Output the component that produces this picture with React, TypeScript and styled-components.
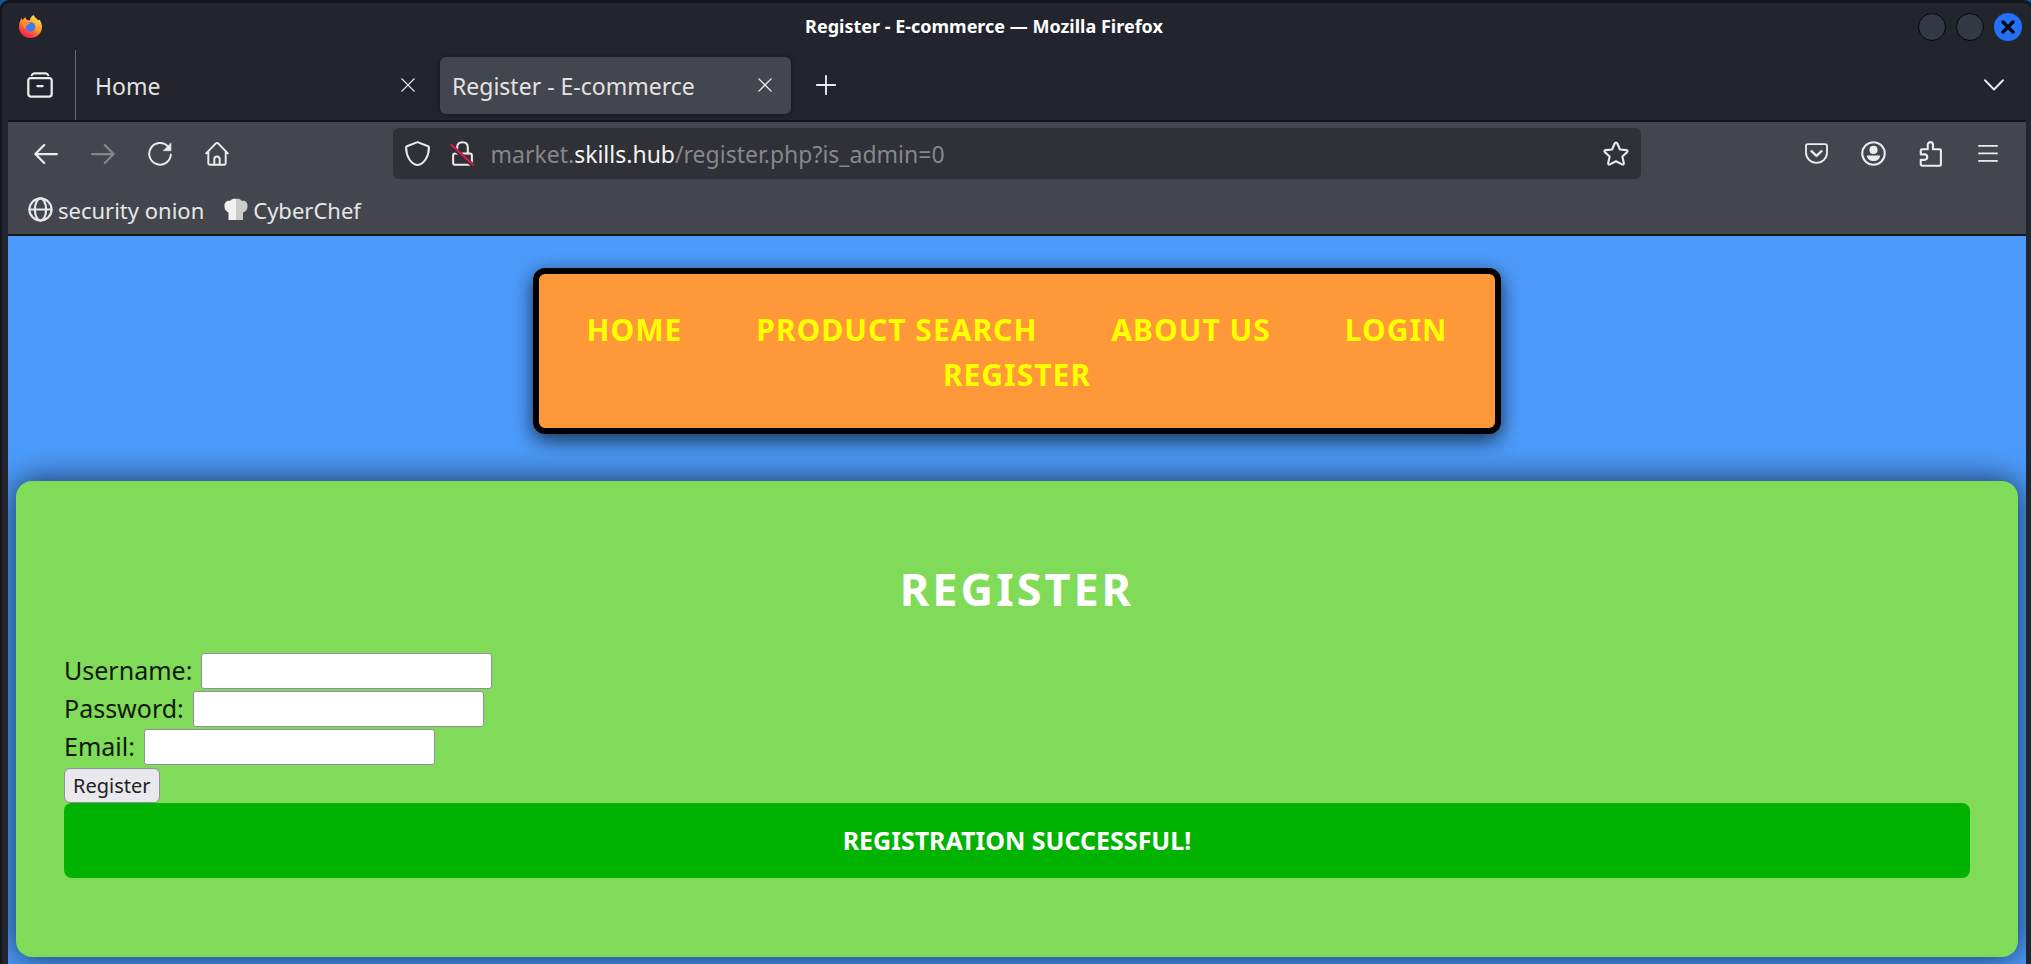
import React from "react";
import styled, { createGlobalStyle } from "styled-components";

const GlobalStyle = createGlobalStyle`
  *, *::before, *::after { box-sizing: border-box; }
  body {
    margin: 0;
    background: #14151b;
    font-family: "Noto Sans", "Open Sans", sans-serif;
  }
  button, input { font-family: inherit; }
`;

const Desktop = styled.div`
  min-height: 100vh;
  display: flex;
  flex-direction: column;
  padding: 3px 0 0 2px;
  background: linear-gradient(#17181f, #17181f) 0 8px no-repeat, #0a5a9c;
`;

const BrowserWindow = styled.div`
  flex: 1;
  display: flex;
  flex-direction: column;
  background: #23252e;
  border-radius: 8px 8px 0 0;
  padding: 0 5px 0 6px;
  box-shadow: 0 0 0 3px #14151b;
`;

const TitleBar = styled.header`
  display: flex;
  align-items: center;
  height: 47px;
  padding: 0 4px 0 11px;
`;

const WindowTitle = styled.div`
  flex: 1;
  text-align: center;
  color: #fff;
  font-size: 18px;
  font-weight: 700;
  line-height: 26px;
  margin-left: 8px;
  padding-bottom: 2px;
`;

const WindowButtons = styled.div`
  display: flex;
  gap: 10px;
`;

const WindowButton = styled.button<{ $close?: boolean }>`
  display: grid;
  place-items: center;
  width: 28px;
  height: 28px;
  padding: 0;
  border-radius: 50%;
  border: ${(p) => (p.$close ? "0" : "1px solid #060709")};
  background: ${(p) => (p.$close ? "#2470f7" : "#343844")};
`;

const TabStrip = styled.div`
  display: flex;
  align-items: center;
  height: 72px;
  border-bottom: 2px solid #14151b;
`;

const IconButton = styled.button<{ $w?: number; $dim?: boolean }>`
  display: grid;
  place-items: center;
  flex: none;
  width: ${(p) => p.$w ?? 57}px;
  height: 50px;
  padding: 0;
  border: 0;
  background: none;
  color: ${(p) => (p.$dim ? "#85868b" : "#ebebec")};
`;

const ViewCell = styled.div`
  align-self: stretch;
  display: flex;
  align-items: center;
  width: 68px;
  padding-left: 3px;
  border-right: 1px solid #66686e;
`;

const Tabs = styled.div`
  display: flex;
  gap: 6px;
  margin-left: 7px;
`;

const Tab = styled.div<{ $active?: boolean }>`
  display: flex;
  align-items: center;
  width: 351px;
  height: 57px;
  padding-left: 12px;
  border-radius: 6px;
  color: #e2e2e3;
  background: ${(p) => (p.$active ? "#44464d" : "transparent")};
  box-shadow: ${(p) => (p.$active ? "0 0 4px rgba(0, 0, 0, 0.5)" : "none")};
`;

const TabLabel = styled.span`
  flex: 1;
  padding-top: 2px;
  font-size: 23px;
  line-height: 32px;
`;

const Spacer = styled.div`
  flex: 1;
`;

const Toolbars = styled.div`
  background: #44464d;
  border-bottom: 2px solid #17181f;
`;

const NavBar = styled.div`
  display: flex;
  align-items: center;
  height: 63px;
  padding: 0 10px 0 9px;
`;

const AddressBox = styled.div`
  flex: 0 1 1248px;
  display: flex;
  align-items: center;
  height: 51px;
  padding: 0 2px;
  border-radius: 6px;
  background: #303136;
`;

const Address = styled.div`
  flex: 1;
  padding-left: 6px;
  color: #86878b;
  font-size: 23px;
  line-height: 32px;
  white-space: nowrap;

  b {
    color: #f4f4f4;
    font-weight: 400;
  }
`;

const BookmarkBar = styled.nav`
  display: flex;
  align-items: center;
  gap: 20px;
  height: 49px;
  padding: 0 20px;
`;

const Bookmark = styled.a`
  display: flex;
  align-items: center;
  gap: 5px;
  color: #e6e6e7;
  font-size: 22px;
  line-height: 32px;
  text-decoration: none;
`;

const Page = styled.main`
  flex: 1;
  display: flex;
  flex-direction: column;
  padding: 32px 0 7px;
  overflow: hidden;
  background: #4c9bfb;
`;

const SiteNav = styled.nav`
  align-self: center;
  width: 48%;
  min-width: 480px;
  padding: 33px 8px 31px;
  border: 6px solid #000;
  border-radius: 12px;
  background: #ff9838;
  box-shadow: 0 6px 20px rgba(0, 0, 0, 0.7);
`;

const NavList = styled.ul`
  display: flex;
  flex-wrap: wrap;
  justify-content: center;
  column-gap: 74px;
  margin: 0;
  padding: 0;
  list-style: none;
`;

const NavLink = styled.a`
  display: block;
  color: #ff0;
  font-size: 30px;
  font-weight: 700;
  line-height: 45px;
  letter-spacing: 1px;
  text-decoration: none;
  text-transform: uppercase;
`;

const Card = styled.section`
  flex: 1;
  margin: 47px 8px 0;
  padding: 78px 48px;
  border-radius: 16px;
  background: #7fdb58;
  box-shadow: 0 0 32px rgba(0, 0, 0, 0.7);
`;

const Heading = styled.h1`
  margin: 0 0 32px;
  color: #fff;
  font-size: 45px;
  line-height: 60px;
  letter-spacing: 3px;
  text-align: center;
  text-transform: uppercase;
`;

const Field = styled.div`
  display: flex;
  align-items: flex-end;
  gap: 9px;
  height: 38px;

  label {
    color: #10180c;
    font-size: 25px;
    line-height: 38px;
  }

  input {
    width: 291px;
    height: 36px;
    padding: 2px 6px;
    border: 1px solid #8f8f9d;
    border-radius: 3px;
    background: #fff;
    font-size: 20px;
  }
`;

const SubmitButton = styled.button`
  display: block;
  height: 35px;
  margin-top: 3px;
  padding: 0 8px;
  border: 1px solid #8f8f9d;
  border-radius: 6px;
  background: #e9e9ed;
  color: #222;
  font-size: 20px;
  line-height: 28px;
`;

const Message = styled.p`
  margin: 0;
  padding: 19px;
  border-radius: 8px;
  background: #00b300;
  color: #fff;
  font-size: 25px;
  font-weight: 700;
  line-height: 37px;
  text-align: center;
  text-transform: uppercase;
`;

type IconProps = { size?: number; sw?: number; children: React.ReactNode };

const Icon = ({ size = 24, sw = 1.3, children }: IconProps) => (
  <svg
    width={size}
    height={size}
    viewBox="0 0 16 16"
    fill="none"
    stroke="currentColor"
    strokeWidth={sw}
    strokeLinecap="round"
    strokeLinejoin="round"
    aria-hidden="true"
  >
    {children}
  </svg>
);

const FirefoxLogo = () => (
  <svg width="23" height="23" viewBox="0 0 24 24" aria-hidden="true">
    <defs>
      <linearGradient id="flame" x1="0.85" y1="0.1" x2="0.3" y2="1">
        <stop offset="0" stopColor="#ffe14a" />
        <stop offset="0.45" stopColor="#ff9a2e" />
        <stop offset="0.75" stopColor="#ff4a3d" />
        <stop offset="1" stopColor="#e8205e" />
      </linearGradient>
    </defs>
    <path
      d="M15 0c1 2 3.500 3.500 5 5.500C20.500 5 21 5 21.300 4.600 23 7 24 10 24 12.500 24 19 18.500 24 12 24S0 19 0 12.500C0 8 1.500 5.500 2.800 3.200c.2 1 .6 1.800 1 2.300C4.500 4 5.500 2.800 6.800 2c0 1.500.7 2.600 1.700 3.200 1 .3 2 .2 3 .2C11.500 3.500 13 1.200 15 0z"
      fill="url(#flame)"
    />
    <circle cx="12" cy="12.500" r="5" fill="#3f78f2" />
    <path d="M4 8c2-2 5.500-1.500 7.500.8-1 .9-2.500 1-3.300 1.800-.9.900-.5 2.400-1.700 3.400C4.700 12.500 3.800 10.300 4 8z" fill="#ff8a2a" />
  </svg>
);

const CloseIcon = () => (
  <Icon size={14} sw={1.6}>
    <path d="M1 1l14 14M15 1L1 15" />
  </Icon>
);

const ChefHat = () => (
  <svg width="24" height="24" viewBox="0 0 24 24" aria-hidden="true">
    <path d="M4.500 22V14.500C2 13.500.5 11.500.5 8.500 0 5 2.500 2.200 6 3 7.500 1 10 .6 12 1v21z" fill="#f2f2f2" />
    <path d="M12 1c2-.4 4.500 0 6 2 3.500-.8 6 2 5.500 5.500 0 3-1.500 5-4.500 6V22h-7z" fill="#cbcbcc" />
  </svg>
);

const fields = [
  { id: "username", label: "Username:", type: "text" },
  { id: "password", label: "Password:", type: "password" },
  { id: "email", label: "Email:", type: "email" },
];

const links = ["Home", "Product Search", "About Us", "Login", "Register"];

export default function App() {
  return (
    <>
      <GlobalStyle />
      <Desktop>
        <BrowserWindow>
          <TitleBar>
            <FirefoxLogo />
            <WindowTitle>Register - E-commerce — Mozilla Firefox</WindowTitle>
            <WindowButtons>
              <WindowButton aria-label="Minimize" />
              <WindowButton aria-label="Maximize" />
              <WindowButton aria-label="Close" $close>
                <svg width="14" height="14" viewBox="0 0 14 14" stroke="#06080d" strokeWidth="3.200" strokeLinecap="round">
                  <path d="M2 2l10 10M12 2L2 12" />
                </svg>
              </WindowButton>
            </WindowButtons>
          </TitleBar>

          <TabStrip>
            <ViewCell>
              <IconButton aria-label="Firefox View">
                <Icon size={26} sw={1.4}>
                  <path d="M3 1.900c.3-.8.800-1.100 1.600-1.100h6.800c.8 0 1.300.3 1.600 1.100" />
                  <rect x="0.800" y="3.800" width="14.400" height="11.400" rx="1.600" />
                  <path d="M6.400 8.700h3.200" />
                </Icon>
              </IconButton>
            </ViewCell>
            <Tabs>
              <Tab>
                <TabLabel>Home</TabLabel>
                <IconButton $w={52} aria-label="Close tab"><CloseIcon /></IconButton>
              </Tab>
              <Tab $active>
                <TabLabel>Register - E-commerce</TabLabel>
                <IconButton $w={52} aria-label="Close tab"><CloseIcon /></IconButton>
              </Tab>
            </Tabs>
            <IconButton $w={70} aria-label="New tab">
              <Icon size={20} sw={1.500}><path d="M8 .7v14.600M.7 8h14.600" /></Icon>
            </IconButton>
            <Spacer />
            <IconButton $w={64} aria-label="List all tabs">
              <Icon size={20} sw={1.500}><path d="M.8 4.200L8 11.600l7.200-7.400" /></Icon>
            </IconButton>
          </TabStrip>

          <Toolbars>
            <NavBar>
              <IconButton aria-label="Back">
                <Icon sw={1.500}><path d="M15.200 8H1M6.800 2L.9 8l5.900 6" /></Icon>
              </IconButton>
              <IconButton $dim aria-label="Forward">
                <Icon sw={1.500}><path d="M.8 8H15M9.200 2l5.900 6-5.900 6" /></Icon>
              </IconButton>
              <IconButton aria-label="Reload">
                <Icon>
                  <path d="M15.200 8.400A7.200 7.200 0 1 1 13.400 3.100" />
                  <path d="M15.300.8v5h-5z" fill="currentColor" strokeWidth={0.4} />
                </Icon>
              </IconButton>
              <IconButton aria-label="Home page">
                <Icon>
                  <path d="M.8 7.600L6.900 1.200q1.100-1 2.200 0l6.100 6.400M2.200 6.500v7.700q0 1 1 1h9.600q1 0 1-1V6.500" />
                  <path d="M6.200 15v-3.700q0-1.700 1.800-1.700t1.800 1.700V15" />
                </Icon>
              </IconButton>
              <Spacer />
              <AddressBox>
                <IconButton $w={45} aria-label="Tracking protection">
                  <Icon size={25}><path d="M8 .7l6.800 2.700q.5.200.5.700C15.300 9.500 12.200 15.300 8 15.300S.7 9.500.7 4.100q0-.5.500-.7z" /></Icon>
                </IconButton>
                <IconButton $w={45} aria-label="Connection not secure">
                  <Icon size={25}>
                    <rect x="2" y="8" width="12" height="7.200" rx="1.200" />
                    <path d="M4.600 8V4.200Q4.600.8 8 .8t3.400 3.400V8" />
                    <path d="M1 3.300l13 11.700" stroke="#303136" strokeWidth={2.600} />
                    <path d="M1 2.500l13.800 12.700" stroke="#e2184a" />
                  </Icon>
                </IconButton>
                <Address>
                  market.<b>skills.hub</b>/register.php?is_admin=0
                </Address>
                <IconButton $w={46} aria-label="Bookmark this page">
                  <Icon size={26}>
                    <path d="M8 1q.6 0 .9.700l1.500 3.500 3.900.4q1.300.3.500 1.300l-2.900 2.700.9 3.900q.1 1.300-1.100.9L8 12.500l-3.700 1.900q-1.200.4-1.100-.9l.9-3.900-2.900-2.700q-.8-1 .5-1.300l3.900-.4 1.500-3.500Q7.400 1 8 1z" />
                  </Icon>
                </IconButton>
              </AddressBox>
              <Spacer />
              <IconButton aria-label="Save to Pocket">
                <Icon size={23}>
                  <path d="M2 1.500h12q1.300 0 1.300 1.300V7.500a7.300 7 0 0 1-14.600 0V2.800Q.7 1.500 2 1.500z" />
                  <path d="M4.500 6.400L8 9.600l3.500-3.200" strokeWidth={1.600} />
                </Icon>
              </IconButton>
              <IconButton aria-label="Account">
                <Icon size={25}>
                  <circle cx="8" cy="8" r="7.200" />
                  <circle cx="8" cy="5.700" r="2.600" fill="currentColor" stroke="none" />
                  <path d="M3.800 9.200h8.400c0 2-1.800 3.600-4.200 3.600S3.800 11.200 3.800 9.200z" fill="currentColor" stroke="none" />
                </Icon>
              </IconButton>
              <IconButton aria-label="Extensions">
                <Icon size={26}>
                  <path d="M1.700 14.200V11.600h2.300a1.700 1.700 0 0 0 0-3.400H1.700V5.900q0-.8.800-.8H6V2.300a1.600 1.600 0 0 1 3.200 0v2.800h4.100q.8 0 .8.800v8.500q0 .8-.8.800H2.700q-1 0-1-1z" />
                </Icon>
              </IconButton>
              <IconButton aria-label="Open menu">
                <Icon size={20} sw={1.500}><path d="M.8 1.500h14.400M.8 7.500h14.400M.8 13.500h14.400" /></Icon>
              </IconButton>
            </NavBar>
            <BookmarkBar>
              <Bookmark href="#">
                <Icon size={25} sw={1.400}>
                  <circle cx="8" cy="8" r="7.100" />
                  <ellipse cx="8" cy="8" rx="3.600" ry="7.100" />
                  <path d="M1 8h14" />
                </Icon>
                security onion
              </Bookmark>
              <Bookmark href="#">
                <ChefHat />
                CyberChef
              </Bookmark>
            </BookmarkBar>
          </Toolbars>

          <Page>
            <SiteNav>
              <NavList>
                {links.map((text) => (
                  <li key={text}><NavLink href="#">{text}</NavLink></li>
                ))}
              </NavList>
            </SiteNav>
            <Card>
              <Heading>Register</Heading>
              <form onSubmit={(e) => e.preventDefault()}>
                {fields.map((f) => (
                  <Field key={f.id}>
                    <label htmlFor={f.id}>{f.label}</label>
                    <input id={f.id} type={f.type} />
                  </Field>
                ))}
                <SubmitButton>Register</SubmitButton>
              </form>
              <Message>Registration successful!</Message>
            </Card>
          </Page>
        </BrowserWindow>
      </Desktop>
    </>
  );
}
